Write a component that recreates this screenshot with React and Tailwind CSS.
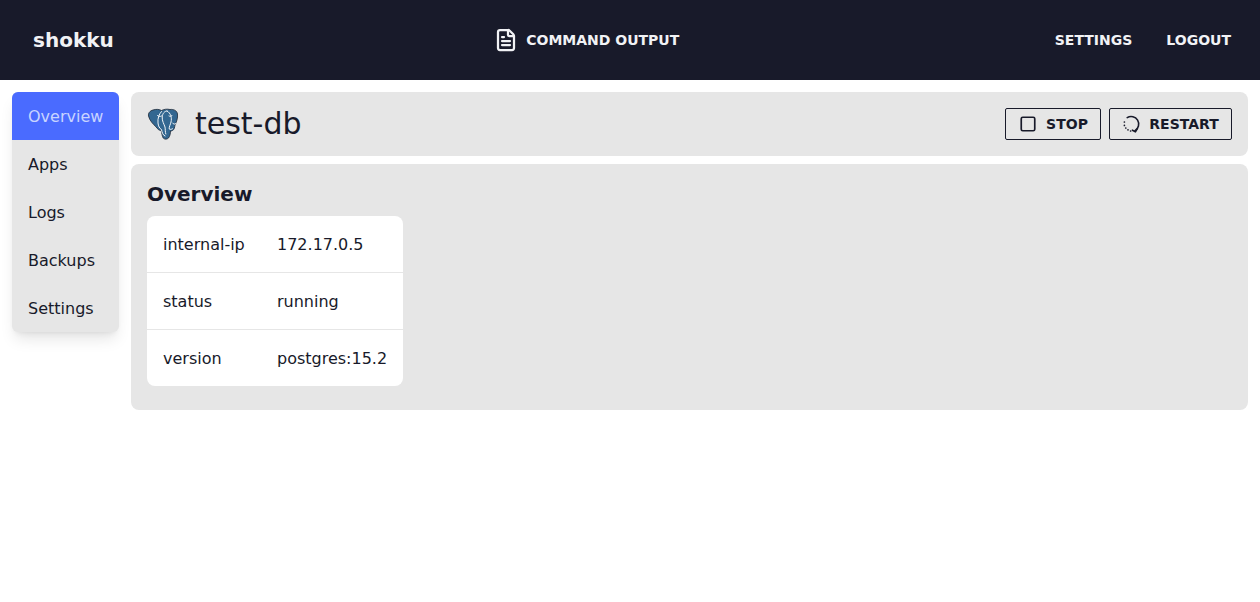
import React from "react";
import { FileText, Square } from "lucide-react";

const pgBody = "M6 2C9 1 12 1.2 14.5 2.5C17 1.2 20 0.8 23 1.5C26.5 1 30 2.5 30.5 6C31 10 29.5 14 28 17C27.5 19.5 27.5 21.5 25.5 22.5C24.8 23 24 23 23.5 23C23.5 25.5 23 28 21.5 30C20 31.5 17.5 31.5 16.2 30C15 28 14.8 25 14.2 22.5C12 22.5 10.5 21 9.2 19C6.5 16.5 2.5 12.5 1.5 8C1 5 3 2.8 6 2Z";

function Pg() {
  return (
    <svg width="32" height="32" viewBox="0 0 32 32" aria-hidden="true">
      <path d={pgBody} fill="#336791" stroke="#1f2937" strokeWidth="0.8" />
      <path d="M14.5 3.5C12 6 10.5 10.5 11 15C11.3 18 12.5 20.5 14.5 21.5C15 24.5 16 27.5 18 28M20 3C17.5 3 15.5 5.5 15.2 9C15 13 17 16 18 19C18.5 21.5 18 24 18.8 26M20 3C24 5 25 10 24 14C23.5 16.5 22 18.5 22.2 21C23 21.6 24.5 21.5 25.5 20.8M25.5 15C26.5 16.5 28 16.5 28.8 15.5M10.5 7.5C11 8.5 13 9 14.5 8M22 8C23 8.6 24.5 8.4 25 7.5" fill="none" stroke="#f3f6f9" strokeWidth="1" strokeLinecap="round" strokeLinejoin="round" />
    </svg>
  );
}

function RestartIcon() {
  return (
    <svg width="18" height="18" viewBox="0 0 18 18" fill="none" stroke="#181a2a" strokeWidth="1.6" strokeLinecap="round" strokeLinejoin="round" aria-hidden="true">
      <path d="M4.2 2.6A7.4 7.4 0 1 1 12 15.6" />
      <path d="M9.4 15.2L12.4 16.8L14.4 13.6" />
      <path d="M1.4 7V7.01M1.4 10.4V10.41M2.8 13V13.01M5 14.8V14.81M7.6 16V16.01" strokeWidth="1.7" />
    </svg>
  );
}

const nav = ["Overview", "Apps", "Logs", "Backups", "Settings"];
const rows = [
  ["internal-ip", "172.17.0.5"],
  ["status", "running"],
  ["version", "postgres:15.2"],
];

export default function App() {
  return (
    <div className="min-h-[602px] bg-white text-[#181a2a] font-['DejaVu_Sans',sans-serif]">
      <header className="h-20 bg-[#181a2a] flex items-center justify-between pl-[33px] pr-[29px] text-[#f1f2f5]">
        <div className="text-xl font-bold leading-7">shokku</div>
        <div className="flex items-center gap-2 ml-[5px]">
          <FileText strokeWidth={2.25} className="w-6 h-6" />
          <span className="text-sm font-bold leading-5">COMMAND OUTPUT</span>
        </div>
        <div className="flex items-center gap-[34px] text-sm font-bold leading-5">
          <span>SETTINGS</span>
          <span>LOGOUT</span>
        </div>
      </header>
      <div className="flex items-start gap-3 p-3">
        <nav className="w-[107px] shrink-0 rounded-md bg-[#e6e6e6] shadow-lg overflow-hidden text-base">
          {nav.map((n, i) => (
            <div key={n} className={"h-12 flex items-center px-4 pt-[2px] " + (i === 0 ? "bg-[#4a6bff] text-[#c8d4ff]" : "")}>
              {n}
            </div>
          ))}
        </nav>
        <main className="flex-1 flex flex-col gap-2">
          <section className="h-16 rounded-lg bg-[#e6e6e6] flex items-center justify-between pl-4 pr-4">
            <div className="flex items-center gap-4">
              <Pg />
              <h1 className="text-3xl leading-9">test-db</h1>
            </div>
            <div className="flex items-center gap-2">
              <button className="h-8 w-24 flex items-center justify-center gap-[9px] pl-px border border-[#181a2a] rounded-[2px] text-sm font-bold">
                <Square size={18} strokeWidth={2.25} />
                STOP
              </button>
              <button className="h-8 w-[123px] flex items-center justify-center gap-[8px] pl-px border border-[#181a2a] rounded-[2px] text-sm font-bold">
                <RestartIcon />
                RESTART
              </button>
            </div>
          </section>
          <section className="rounded-lg bg-[#e6e6e6] p-4 pb-6">
            <h2 className="text-xl font-bold leading-7 mb-2">Overview</h2>
            <div className="w-64 rounded-lg bg-white">
              {rows.map(([k, v], i) => (
                <div key={k} className={"flex items-center px-4 pt-[2px] " + (i > 0 ? "h-[57px] border-t border-[#e6e6e6]" : "h-[56px]")}>
                  <span className="w-[114px] shrink-0">{k}</span>
                  <span>{v}</span>
                </div>
              ))}
            </div>
          </section>
        </main>
      </div>
    </div>
  );
}
